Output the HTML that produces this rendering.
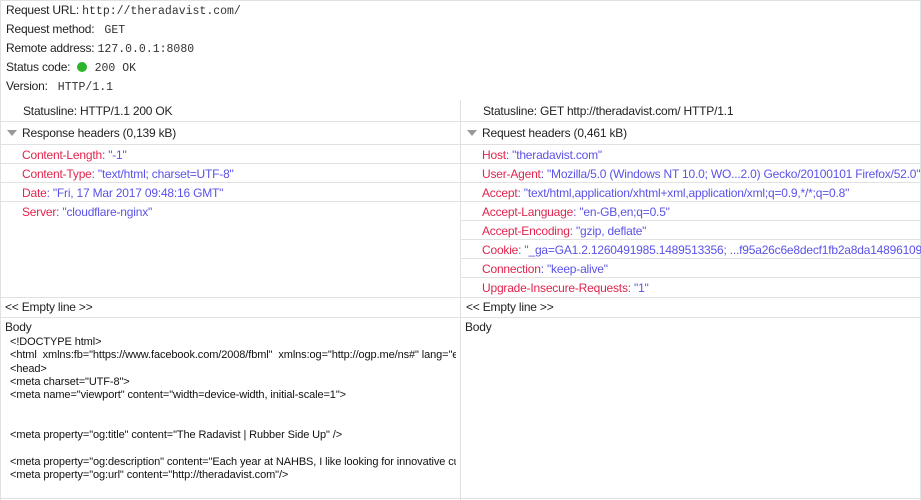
<!DOCTYPE html>
<html><head><style>
body{margin:0;width:921px;height:500px;background:#fff;font-family:"Liberation Sans",sans-serif;font-size:12px;letter-spacing:-0.2px;color:#222;position:relative;overflow:hidden}
.a{position:absolute;white-space:nowrap}
.m{font-family:"Liberation Mono",monospace;font-size:11.5px;color:#333;letter-spacing:0}
.h{position:absolute;height:1px;background:#e1e1e1}
.v{position:absolute;width:1px;background:#e1e1e1}
.k{color:#e0244d}.s{color:#5b52e8}
.c{font-size:11px;letter-spacing:-0.1px;color:#111}
.tri{display:inline-block;width:0;height:0;border-left:5px solid transparent;border-right:5px solid transparent;border-top:6px solid #999;margin-right:5px;vertical-align:1px}
</style></head><body>
<div class="h" style="left:0;top:0;width:921px"></div>
<div class="v" style="left:0;top:0;height:500px"></div>
<div class="v" style="left:920px;top:0;height:500px"></div>
<div class="a" style="left:6px;top:3px">Request URL: <span class="m">http://theradavist.com/</span></div>
<div class="a" style="left:6px;top:22px">Request method: <span class="m">&nbsp;GET</span></div>
<div class="a" style="left:6px;top:41px">Remote address: <span class="m">127.0.0.1:8080</span></div>
<div class="a" style="left:6px;top:60px">Status code: <span style="display:inline-block;width:10px;height:10px;border-radius:5px;background:#2bb52b;vertical-align:-1px;margin:0 4px 0 4px"></span> <span class="m">200 OK</span></div>
<div class="a" style="left:6px;top:79px">Version: <span class="m">&nbsp;HTTP/1.1</span></div>

<div class="v" style="left:460px;top:100px;height:400px"></div>
<div class="a" style="left:23px;top:104px">Statusline: HTTP/1.1 200 OK</div>
<div class="a" style="left:483px;top:104px">Statusline: GET http://theradavist.com/ HTTP/1.1</div>
<div class="h" style="left:0;top:121px;width:921px"></div>
<div class="a" style="left:7px;top:126px"><span class="tri"></span>Response headers (0,139 kB)</div>
<div class="a" style="left:467px;top:126px"><span class="tri"></span>Request headers (0,461 kB)</div>
<div class="h" style="left:0;top:144px;width:921px"></div>

<div class="a" style="left:22px;top:148px"><span class="k">Content-Length</span><span class="s">: "-1"</span></div>
<div class="h" style="left:0;top:163px;width:460px"></div>
<div class="a" style="left:22px;top:167px"><span class="k">Content-Type</span><span class="s">: "text/html; charset=UTF-8"</span></div>
<div class="h" style="left:0;top:182px;width:460px"></div>
<div class="a" style="left:22px;top:186px"><span class="k">Date</span><span class="s">: "Fri, 17 Mar 2017 09:48:16 GMT"</span></div>
<div class="h" style="left:0;top:201px;width:460px"></div>
<div class="a" style="left:22px;top:205px"><span class="k">Server</span><span class="s">: "cloudflare-nginx"</span></div>

<div class="a" style="left:482px;top:148px"><span class="k">Host</span><span class="s">: "theradavist.com"</span></div>
<div class="h" style="left:460px;top:163px;width:461px"></div>
<div class="a" style="left:482px;top:167px"><span class="k">User-Agent</span><span class="s">: "Mozilla/5.0 (Windows NT 10.0; WO...2.0) Gecko/20100101 Firefox/52.0"</span></div>
<div class="h" style="left:460px;top:182px;width:461px"></div>
<div class="a" style="left:482px;top:186px"><span class="k">Accept</span><span class="s">: "text/html,application/xhtml+xml,application/xml;q=0.9,*/*;q=0.8"</span></div>
<div class="h" style="left:460px;top:201px;width:461px"></div>
<div class="a" style="left:482px;top:205px"><span class="k">Accept-Language</span><span class="s">: "en-GB,en;q=0.5"</span></div>
<div class="h" style="left:460px;top:220px;width:461px"></div>
<div class="a" style="left:482px;top:224px"><span class="k">Accept-Encoding</span><span class="s">: "gzip, deflate"</span></div>
<div class="h" style="left:460px;top:239px;width:461px"></div>
<div class="a" style="left:482px;top:243px"><span class="k">Cookie</span><span class="s">: "_ga=GA1.2.1260491985.1489513356; ...f95a26c6e8decf1fb2a8da1489610989"</span></div>
<div class="h" style="left:460px;top:258px;width:461px"></div>
<div class="a" style="left:482px;top:262px"><span class="k">Connection</span><span class="s">: "keep-alive"</span></div>
<div class="h" style="left:460px;top:277px;width:461px"></div>
<div class="a" style="left:482px;top:281px"><span class="k">Upgrade-Insecure-Requests</span><span class="s">: "1"</span></div>

<div class="h" style="left:0;top:297px;width:921px"></div>
<div class="a" style="left:5px;top:300px">&lt;&lt; Empty line &gt;&gt;</div>
<div class="a" style="left:466px;top:300px">&lt;&lt; Empty line &gt;&gt;</div>
<div class="h" style="left:0;top:317px;width:921px"></div>
<div class="a" style="left:5px;top:320px">Body</div>
<div class="a" style="left:465px;top:320px">Body</div>
<div class="a c" style="left:10px;top:336px;width:446px;overflow:hidden;line-height:13.3px">&lt;!DOCTYPE html&gt;<br>&lt;html&nbsp; xmlns:fb="https://www.facebook.com/2008/fbml"&nbsp; xmlns:og="http://ogp.me/ns#" lang="en"<br>&lt;head&gt;<br>&lt;meta charset="UTF-8"&gt;<br>&lt;meta name="viewport" content="width=device-width, initial-scale=1"&gt;<br><br><br>&lt;meta property="og:title" content="The Radavist | Rubber Side Up" /&gt;<br><br>&lt;meta property="og:description" content="Each year at NAHBS, I like looking for innovative custom<br>&lt;meta property="og:url" content="http://theradavist.com"/&gt;</div>
<div class="h" style="left:0;top:498px;width:921px"></div>
</body></html>
